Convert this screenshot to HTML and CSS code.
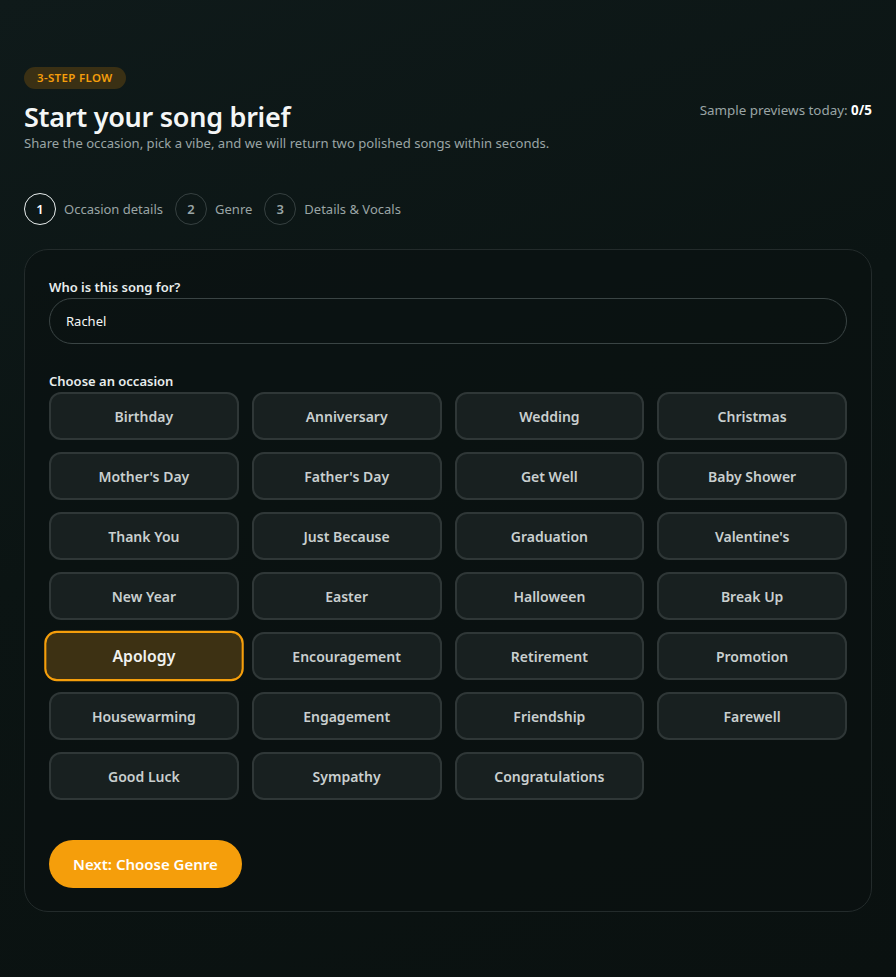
FILE: index.html
```html
<!DOCTYPE html>
<html lang="en">
<head>
    <meta charset="UTF-8">
    <meta name="viewport" content="width=device-width, initial-scale=1.0">
    <title>Song Brief</title>
    <link rel="stylesheet" href="styles.css">
</head>
<body>
    <div class="page">
        <span class="badge">3-Step Flow</span>

        <div class="header">
            <div>
                <h1>Start your song brief</h1>
                <p class="subtitle">Share the occasion, pick a vibe, and we will return two polished songs within seconds.</p>
            </div>
            <div class="quota">Sample previews today: <strong>0/5</strong></div>
        </div>

        <!-- Step indicator -->
        <div class="steps">
            <div class="step active"><span class="step-num">1</span>Occasion details</div>
            <div class="step"><span class="step-num">2</span>Genre</div>
            <div class="step"><span class="step-num">3</span>Details &amp; Vocals</div>
        </div>

        <form class="card" id="briefForm">
            <label class="field-label" for="recipient">Who is this song for?</label>
            <input type="text" id="recipient" class="text-input" value="Rachel">

            <div class="field-label occasion-label">Choose an occasion</div>
            <div class="occasions">
                <button type="button" class="occasion">Birthday</button>
                <button type="button" class="occasion">Anniversary</button>
                <button type="button" class="occasion">Wedding</button>
                <button type="button" class="occasion">Christmas</button>
                <button type="button" class="occasion">Mother's Day</button>
                <button type="button" class="occasion">Father's Day</button>
                <button type="button" class="occasion">Get Well</button>
                <button type="button" class="occasion">Baby Shower</button>
                <button type="button" class="occasion">Thank You</button>
                <button type="button" class="occasion">Just Because</button>
                <button type="button" class="occasion">Graduation</button>
                <button type="button" class="occasion">Valentine's</button>
                <button type="button" class="occasion">New Year</button>
                <button type="button" class="occasion">Easter</button>
                <button type="button" class="occasion">Halloween</button>
                <button type="button" class="occasion">Break Up</button>
                <button type="button" class="occasion selected">Apology</button>
                <button type="button" class="occasion">Encouragement</button>
                <button type="button" class="occasion">Retirement</button>
                <button type="button" class="occasion">Promotion</button>
                <button type="button" class="occasion">Housewarming</button>
                <button type="button" class="occasion">Engagement</button>
                <button type="button" class="occasion">Friendship</button>
                <button type="button" class="occasion">Farewell</button>
                <button type="button" class="occasion">Good Luck</button>
                <button type="button" class="occasion">Sympathy</button>
                <button type="button" class="occasion">Congratulations</button>
            </div>

            <button type="submit" class="next-btn">Next: Choose Genre</button>
        </form>
    </div>

    <script>
    // pick one occasion at a time
    document.querySelectorAll('.occasion').forEach(function(btn) {
        btn.addEventListener('click', function() {
            document.querySelectorAll('.occasion').forEach(function(b) {
                b.classList.remove('selected');
            });
            btn.classList.add('selected');
        });
    });
    document.getElementById('briefForm').addEventListener('submit', function(e) {
        e.preventDefault();
    });
    </script>
</body>
</html>
```

FILE: styles.css
```css
body {
    margin: 0;
    min-height: 100vh;
    font-family: "Noto Sans", "Open Sans", sans-serif;
    color: #e8eded;
    background: linear-gradient(160deg, #0f1a1a 0%, #0b1413 45%, #0a1110 100%);
}

.page {
    padding: 65px 24px 40px;
}

.badge {
    display: inline-block;
    padding: 3px 13px;
    border-radius: 999px;
    background-color: #3a3014;
    color: #f59e0b;
    font-size: 11.5px;
    font-weight: 600;
    text-transform: uppercase;
    letter-spacing: 0.03em;
    line-height: 16px;
}

.header {
    display: flex;
    justify-content: space-between;
    align-items: flex-start;
    margin-top: 10px;
}

h1 {
    margin: 0;
    font-size: 27px;
    font-weight: 600;
    line-height: 36px;
    color: #f4f6f6;
    letter-spacing: -0.01em;
}

.subtitle {
    margin: 0;
    font-size: 13.1px;
    line-height: 17px;
    color: #9aa5a5;
}

.quota {
    margin-top: 2px;
    font-size: 13.4px;
    color: #9aa5a5;
}

.quota strong {
    color: #ffffff;
}

.steps {
    display: flex;
    gap: 12px;
    margin-top: 41px;
}

.step {
    display: flex;
    align-items: center;
    gap: 8px;
    font-size: 13px;
    color: #9aa5a5;
}

.step-num {
    width: 32px;
    height: 32px;
    box-sizing: border-box;
    border: 1px solid #364040;
    border-radius: 50%;
    display: flex;
    align-items: center;
    justify-content: center;
    font-weight: 600;
    color: #9aa5a5;
}

.step.active .step-num {
    border-color: #e8eded;
    color: #ffffff;
}

.card {
    margin-top: 24px;
    padding: 28px 24px 23px;
    border: 1px solid #232b2b;
    border-radius: 24px;
    background-color: rgba(10, 17, 16, 0.6);
}

.field-label {
    display: block;
    font-size: 13px;
    font-weight: 600;
    color: #e8eded;
    margin-bottom: 2px;
}

.text-input {
    width: 100%;
    height: 46px;
    box-sizing: border-box;
    padding: 0 16px;
    border: 1px solid #3a4444;
    border-radius: 999px;
    background: transparent;
    color: #f4f6f6;
    font-family: inherit;
    font-size: 13px;
    outline: none;
}

.occasion-label {
    margin-top: 28px;
    margin-bottom: 2px;
}

.occasions {
    display: grid;
    grid-template-columns: repeat(4, 1fr);
    gap: 12px 13px;
}

.occasion {
    height: 48px;
    border: 2px solid #2f3737;
    border-radius: 12px;
    background-color: #182020;
    color: #c9cfcf;
    font-family: inherit;
    font-size: 14px;
    font-weight: 600;
    cursor: pointer;
}

.occasion.selected {
    border-color: #f59e0b;
    background-color: #3d3113;
    color: #f1f1ef;
    font-size: 15px;
    transform: scale(1.05);
}

.next-btn {
    margin-top: 40px;
    height: 48px;
    padding: 0 24px;
    border: none;
    border-radius: 999px;
    background-color: #f59e0b;
    color: #ffffff;
    font-family: inherit;
    font-size: 15px;
    font-weight: 600;
    cursor: pointer;
}
```
